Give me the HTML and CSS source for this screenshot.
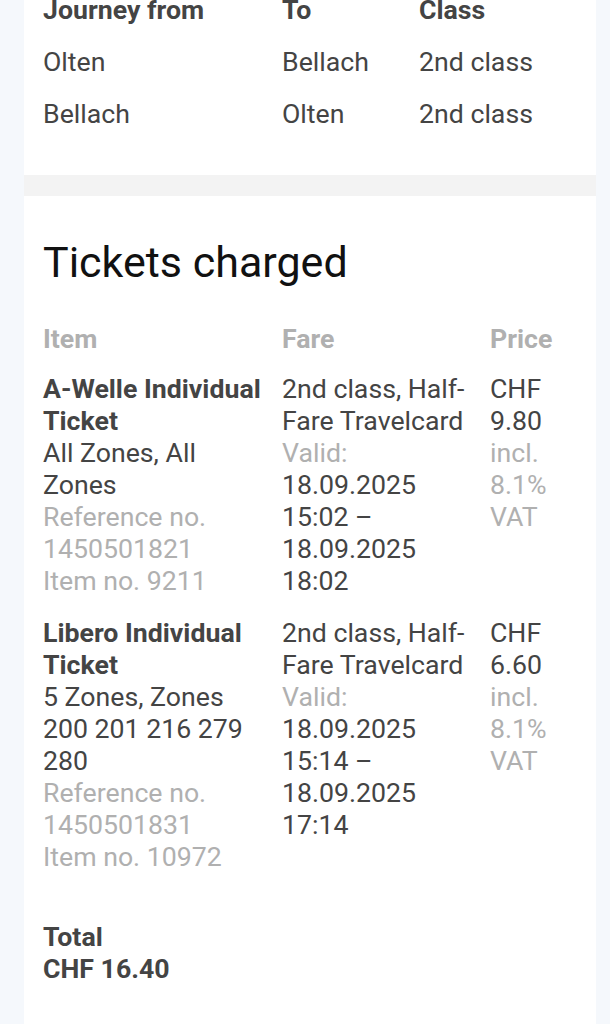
FILE: index.html
```html
<!DOCTYPE html>
<html lang="en">
<head>
    <meta charset="UTF-8">
    <meta name="viewport" content="width=device-width, initial-scale=1.0">
    <title>Receipt - Tickets charged</title>
    <link rel="stylesheet" href="styles.css">
</head>
<body>
    <div class="page">
        <!-- journeys -->
        <section class="card journeys">
            <div class="journey-table">
                <div class="th">Journey from</div>
                <div class="th">To</div>
                <div class="th">Class</div>

                <div>Olten</div>
                <div>Bellach</div>
                <div>2nd class</div>

                <div>Bellach</div>
                <div>Olten</div>
                <div>2nd class</div>
            </div>
        </section>

        <div class="divider"></div>

        <!-- tickets -->
        <section class="card tickets">
            <h2>Tickets charged</h2>

            <div class="ticket-table">
                <div class="th muted">Item</div>
                <div class="th muted">Fare</div>
                <div class="th muted">Price</div>

                <div class="cell">
                    <strong>A-Welle Individual Ticket</strong>
                    <span>All Zones, All Zones</span>
                    <span class="muted">Reference no. 1450501821</span>
                    <span class="muted">Item no. 9211</span>
                </div>
                <div class="cell">
                    <span>2nd class, Half-Fare Travelcard</span>
                    <span class="muted">Valid:</span>
                    <span>18.09.2025 15:02 – 18.09.2025 18:02</span>
                </div>
                <div class="cell">
                    <span>CHF 9.80</span>
                    <span class="muted">incl. 8.1% VAT</span>
                </div>

                <div class="cell">
                    <strong>Libero Individual Ticket</strong>
                    <span>5 Zones, Zones 200 201 216 279 280</span>
                    <span class="muted">Reference no. 1450501831</span>
                    <span class="muted">Item no. 10972</span>
                </div>
                <div class="cell">
                    <span>2nd class, Half-Fare Travelcard</span>
                    <span class="muted">Valid:</span>
                    <span>18.09.2025 15:14 – 18.09.2025 17:14</span>
                </div>
                <div class="cell">
                    <span>CHF 6.60</span>
                    <span class="muted">incl. 8.1% VAT</span>
                </div>
            </div>

            <div class="total">
                <strong>Total</strong>
                <strong>CHF 16.40</strong>
            </div>
        </section>
    </div>
</body>
</html>
```

FILE: styles.css
```css
body {
    font-family: Roboto, "Liberation Sans", Arial, sans-serif;
    margin: 0;
    background-color: #f5f8fc;
    color: #444;
    font-size: 26.7px;
    line-height: 32px;
}

.page {
    margin: -6px 14px 0 24px;
}

.card {
    background: white;
    padding: 0 19px;
}

.journeys {
    padding-bottom: 45px;
}

.journey-table {
    display: grid;
    grid-template-columns: 239px 137px 1fr;
    row-gap: 20px;
}

.th {
    font-weight: bold;
}

.muted {
    color: #b0b0b0;
}

.divider {
    height: 21px;
    background-color: #f3f3f3;
}

.tickets {
    padding-top: 42px;
    padding-bottom: 100px;
}

.tickets h2 {
    margin: 0 0 37px 0;
    font-size: 43px;
    line-height: 48px;
    font-weight: normal;
    color: #111;
}

.ticket-table {
    display: grid;
    grid-template-columns: 223px 192px 1fr;
    column-gap: 16px;
    row-gap: 20px;
}

.ticket-table .th {
    margin-bottom: -2px;
}

.cell {
    display: flex;
    flex-direction: column;
}

.cell strong {
    font-weight: bold;
}

.total {
    margin-top: 48px;
    display: flex;
    flex-direction: column;
}
```
